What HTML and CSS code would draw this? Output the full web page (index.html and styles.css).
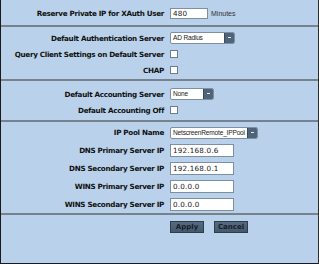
FILE: index.html
```html
<!DOCTYPE html>
<html lang="en">
<head>
  <meta charset="UTF-8" />
  <title>XAuth Settings</title>
  <link rel="stylesheet" href="styles.css">
</head>
<body>
  <form class="panel">
    <!-- XAuth reservation -->
    <div class="section sec-reserve">
      <div class="row">
        <label class="lbl">Reserve Private IP for XAuth User</label>
        <div class="ctl"><input class="txt txt-short" type="text" value="480"><span class="unit">Minutes</span></div>
      </div>
    </div>

    <!-- Authentication -->
    <div class="section sec-auth">
      <div class="row">
        <label class="lbl">Default Authentication Server</label>
        <div class="ctl"><div class="sel sel-auth"><span class="sel-val">AD Radius</span><span class="sel-btn"></span></div></div>
      </div>
      <div class="row">
        <label class="lbl">Query Client Settings on Default Server</label>
        <div class="ctl"><span class="chk"></span></div>
      </div>
      <div class="row">
        <label class="lbl">CHAP</label>
        <div class="ctl"><span class="chk"></span></div>
      </div>
    </div>

    <!-- Accounting -->
    <div class="section sec-acct">
      <div class="row">
        <label class="lbl">Default Accounting Server</label>
        <div class="ctl"><div class="sel sel-acct"><span class="sel-val">None</span><span class="sel-btn"></span></div></div>
      </div>
      <div class="row">
        <label class="lbl">Default Accounting Off</label>
        <div class="ctl"><span class="chk"></span></div>
      </div>
    </div>

    <!-- Pool and name servers -->
    <div class="section sec-pool">
      <div class="row">
        <label class="lbl">IP Pool Name</label>
        <div class="ctl"><div class="sel sel-pool"><span class="sel-val">NetscreenRemote_IPPool</span><span class="sel-btn"></span></div></div>
      </div>
      <div class="row">
        <label class="lbl">DNS Primary Server IP</label>
        <div class="ctl"><input class="txt txt-ip" type="text" value="192.168.0.6"></div>
      </div>
      <div class="row">
        <label class="lbl">DNS Secondary Server IP</label>
        <div class="ctl"><input class="txt txt-ip" type="text" value="192.168.0.1"></div>
      </div>
      <div class="row">
        <label class="lbl">WINS Primary Server IP</label>
        <div class="ctl"><input class="txt txt-ip" type="text" value="0.0.0.0"></div>
      </div>
      <div class="row">
        <label class="lbl">WINS Secondary Server IP</label>
        <div class="ctl"><input class="txt txt-ip" type="text" value="0.0.0.0"></div>
      </div>
    </div>

    <!-- Buttons -->
    <div class="actions">
      <button class="btn" type="button">Apply</button>
      <button class="btn" type="button">Cancel</button>
    </div>
  </form>
</body>
</html>
```
FILE: styles.css
```css
* {
  margin: 0;
  padding: 0;
  box-sizing: border-box;
}
body {
  width: 319px;
  height: 264px;
  overflow: hidden;
  font-family: "DejaVu Sans", Verdana, sans-serif;
  background: #b9d1ea;
}
.panel {
  width: 319px;
  height: 264px;
  background: #b9d1ea;
  border-left: 1px solid #1a1a1a;
  border-right: 1px solid #2a2a2a;
  border-bottom: 1px solid #1a1a1a;
  display: flex;
  flex-direction: column;
}
/* Each group is closed by a grey rule */
.section {
  border-bottom: 2px solid #76838f;
}
.sec-reserve { padding: 4px 0 3px; }
.sec-auth { padding: 3px 0 1px; }
.sec-acct { padding: 5px 0 2px; }
.sec-pool { padding: 2px 0 0; }
.row {
  display: grid;
  grid-template-columns: 163px 1fr;
  column-gap: 6px;
  align-items: center;
  height: 16px;
}
.sec-reserve .row { height: 18px; }
.sec-pool .row { height: 17.8px; }
.lbl {
  text-align: right;
  font-weight: bold;
  font-size: 7.2px;
  letter-spacing: -0.3px;
  color: #111;
  white-space: nowrap;
}
.ctl {
  display: flex;
  align-items: center;
}
/* Text inputs */
.txt {
  background: #fff;
  border: 1px solid #7f8fa3;
  font-family: "DejaVu Sans", Verdana, sans-serif;
  font-size: 7.2px;
  letter-spacing: 0.2px;
  color: #222;
  padding: 0 2px;
  outline: none;
}
.txt-short { width: 38px; height: 11px; }
.txt-ip { width: 64px; height: 13px; }
.unit {
  margin-left: 3px;
  font-family: "Liberation Sans", Arial, sans-serif;
  font-size: 7px;
  color: #333;
}
/* Fake dropdowns */
.sel {
  display: flex;
  align-items: center;
  height: 12px;
  background: #fff;
  border: 1px solid #7f8fa3;
  border-radius: 2px;
  overflow: hidden;
}
.sel-auth { width: 65px; }
.sel-acct { width: 44px; }
.sel-pool { width: 88px; }
.sel-val {
  flex: 1;
  padding-left: 2px;
  font-family: "Liberation Sans", Arial, sans-serif;
  font-size: 6.6px;
  line-height: 10px;
  letter-spacing: -0.2px;
  color: #222;
  white-space: nowrap;
  overflow: hidden;
}
.sel-btn {
  position: relative;
  width: 10px;
  height: 10px;
  background: #4f6479;
  border-left: 1px solid #3a4a5a;
}
.sel-btn::after {
  content: "";
  position: absolute;
  left: 3px;
  top: 4px;
  width: 3px;
  height: 1px;
  background: #e8eef5;
}
/* Checkboxes */
.chk {
  width: 8px;
  height: 8px;
  background: #fff;
  border: 1px solid #6d7d90;
}
/* Button row */
.actions {
  display: flex;
  gap: 10px;
  padding: 6px 0 0 169px;
}
.btn {
  width: 34px;
  height: 12px;
  background: linear-gradient(#566b80, #46596b);
  border: 1px solid #2f3d4b;
  color: #15202b;
  font-family: "DejaVu Sans", Verdana, sans-serif;
  font-weight: bold;
  font-size: 7px;
  line-height: 10px;
}
```
